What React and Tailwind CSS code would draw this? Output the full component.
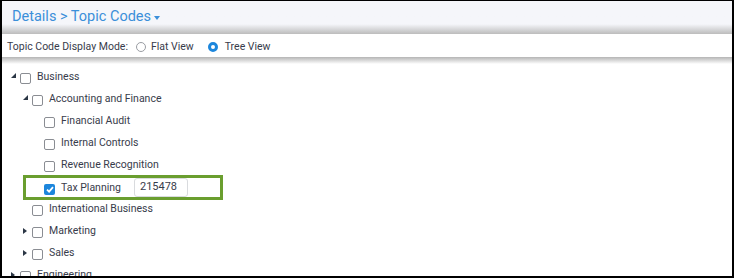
import React from 'react';

const font = { fontFamily: 'Roboto, "Liberation Sans", sans-serif' };

const Caret = ({ open }) =>
  open ? (
    <svg width="5" height="5" viewBox="0 0 5 5" className="mt-[-3px]">
      <polygon points="5,0 5,5 0,5" fill="#2b3645" />
    </svg>
  ) : (
    <svg width="4" height="6" viewBox="0 0 4 6">
      <polygon points="0,0 4,3 0,6" fill="#2b3645" />
    </svg>
  );

const Box = ({ checked }) =>
  checked ? (
    <span className="w-[11px] h-[11px] mt-[3px] rounded-[2px] bg-[#1c86dc] flex items-center justify-center shrink-0">
      <svg width="8" height="7" viewBox="0 0 8 7">
        <path d="M1 3.6 L3.1 5.6 L7 1.2" stroke="#fff" strokeWidth="1.8" fill="none" />
      </svg>
    </span>
  ) : (
    <span className="w-[11px] h-[11px] mt-[3px] rounded-[2px] border border-[#8a8d93] bg-white shrink-0" />
  );

const Row = ({ level, caret, label }) => {
  const pad = ['pl-[9px]', 'pl-[21px]', 'pl-[33px]'][level];
  return (
    <div className={`h-[22px] flex items-center ${pad}`}>
      <span className="w-[9px] flex items-center">{caret !== undefined && <Caret open={caret} />}</span>
      <Box />
      <span className="ml-[6px] text-[10.5px] text-[#383c4b]">{label}</span>
    </div>
  );
};

export default function App() {
  return (
    <div
      style={font}
      className="w-[734px] h-[278px] overflow-hidden bg-white border-t border-l-2 border-r-2 border-b-2 border-black"
    >
      <div className="h-[33px] pl-[10px] pt-[7px] bg-linear-to-b from-[#f5f6fa] from-70% to-[#bcbcbc]">
        <div className="flex items-center text-[14.5px] leading-[18px] text-[#3b8fd9]">
          <span>Details &gt; Topic Codes</span>
          <svg width="6" height="4" viewBox="0 0 6 4" className="ml-[3px] mt-[1px]">
            <polygon points="0,0 6,0 3,4" fill="#3b8fd9" />
          </svg>
        </div>
      </div>

      <div className="h-[23px] pt-[3px] pl-[5px] flex items-center text-[10.5px] text-[#383c4b]">
        <span>Topic Code Display Mode:</span>
        <span className="ml-[8px] w-[10px] h-[10px] rounded-full border border-[#9a9da3]" />
        <span className="ml-[5px]">Flat View</span>
        <span className="ml-[14px] w-[10px] h-[10px] rounded-full border-[3px] border-[#1c86dc] bg-white" />
        <span className="ml-[7px]">Tree View</span>
      </div>
      <div className="h-[7px] bg-linear-to-b from-[#b5b5b5] to-white" />

      <div className="pt-[2px]">
        <Row level={0} caret={true} label="Business" />
        <Row level={1} caret={true} label="Accounting and Finance" />
        <Row level={2} label="Financial Audit" />
        <Row level={2} label="Internal Controls" />
        <Row level={2} label="Revenue Recognition" />
        <div className="ml-[21px] w-[200px] h-[25px] mt-[-1px] mb-[-2px] border-[3px] border-[#6a9e2f] flex items-center pl-[9px]">
          <span className="w-[9px]" />
          <Box checked />
          <span className="ml-[6px] text-[10.5px] text-[#383c4b]">Tax Planning</span>
          <span className="ml-[13px] w-[54px] h-[19px] border border-[#d9dbde] rounded-[3px] flex items-center pl-[5px] text-[11px] text-[#383c4b]">
            215478
          </span>
        </div>
        <Row level={1} label="International Business" />
        <Row level={1} caret={false} label="Marketing" />
        <Row level={1} caret={false} label="Sales" />
        <Row level={0} caret={false} label="Engineering" />
      </div>
    </div>
  );
}
